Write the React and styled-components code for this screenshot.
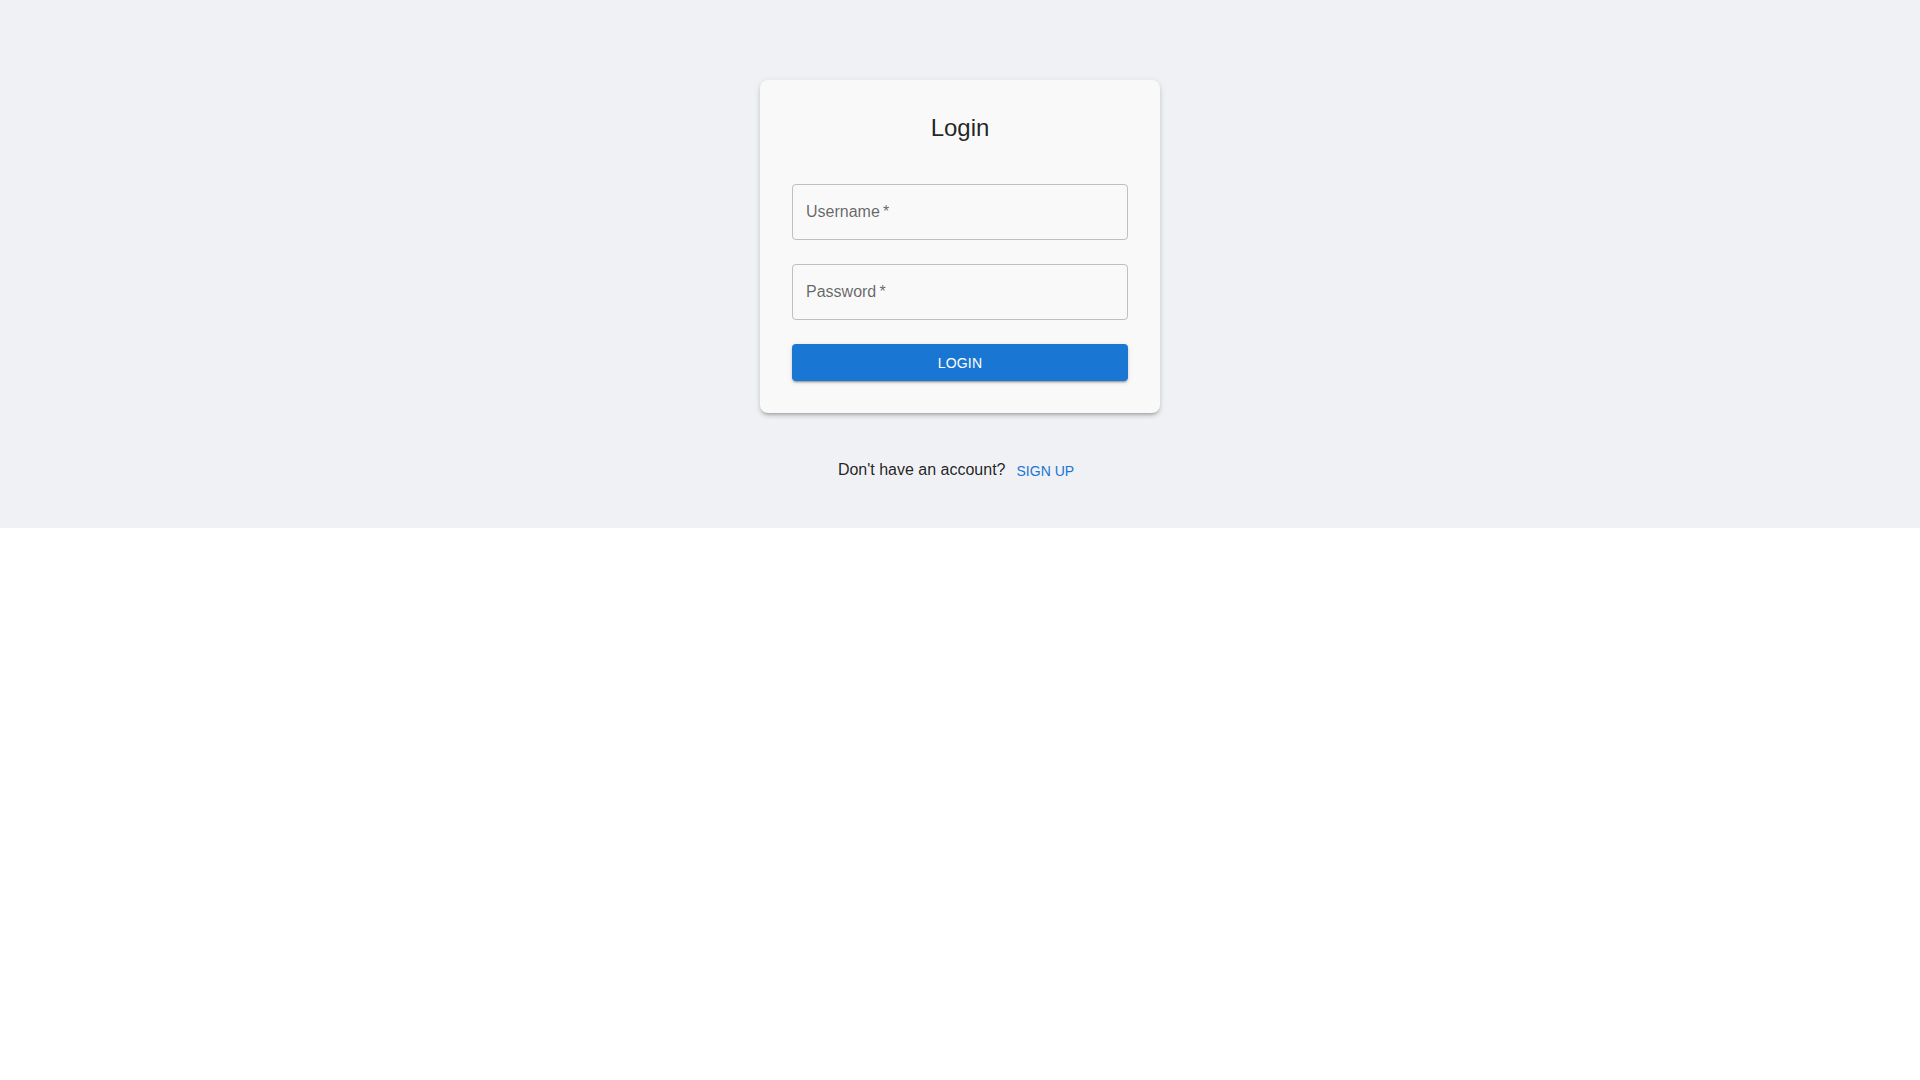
import React from "react"
import styled, { createGlobalStyle } from "styled-components"

export default function App() {
  return (
    <>
      <GlobalStyle />
      <Page>
        <Card>
          <Title>Login</Title>
          <Form onSubmit={(e) => e.preventDefault()}>
            <Field>
              <Input placeholder={"Username\u2009*"} />
            </Field>
            <Field>
              <Input type="password" placeholder={"Password\u2009*"} />
            </Field>
            <SubmitButton type="submit">Login</SubmitButton>
          </Form>
        </Card>
        <SignUpRow>
          <Prompt>Don't have an account?</Prompt>
          <TextButton type="button">Sign Up</TextButton>
        </SignUpRow>
      </Page>
    </>
  )
}

const GlobalStyle = createGlobalStyle`
  html, body {
    margin: 0;
    background: #ffffff;
    font-family: "Liberation Sans", Arial, sans-serif;
  }
  * {
    box-sizing: border-box;
  }
`

const Page = styled.div`
  background: #f0f1f5;
  padding: 80px 0 40px;
  display: flex;
  flex-direction: column;
  align-items: center;
`

const Card = styled.div`
  width: 400px;
  padding: 32px;
  background: #f9f9f9;
  border-radius: 8px;
  box-shadow: 0px 3px 3px -2px rgba(0, 0, 0, 0.2),
    0px 3px 4px 0px rgba(0, 0, 0, 0.14), 0px 1px 8px 0px rgba(0, 0, 0, 0.06);
`

const Title = styled.h1`
  margin: 0 0 24px;
  font-size: 24px;
  font-weight: 400;
  line-height: 32px;
  text-align: center;
  color: rgba(0, 0, 0, 0.87);
`

const Form = styled.form`
  display: flex;
  flex-direction: column;
`

const Field = styled.div`
  margin: 16px 0 8px;
`

const Input = styled.input`
  display: block;
  width: 100%;
  height: 56px;
  padding: 0 13px;
  border: 1px solid rgba(0, 0, 0, 0.23);
  border-radius: 4px;
  background: transparent;
  font-family: inherit;
  font-size: 16px;
  color: rgba(0, 0, 0, 0.87);
  outline: none;

  &::placeholder {
    color: rgba(0, 0, 0, 0.6);
  }
`

const SubmitButton = styled.button`
  margin-top: 16px;
  height: 37px;
  border: none;
  border-radius: 4px;
  background: #1976d2;
  color: #ffffff;
  font-family: inherit;
  font-size: 14px;
  text-transform: uppercase;
  letter-spacing: 0.2px;
  cursor: pointer;
  box-shadow: 0px 3px 1px -2px rgba(0, 0, 0, 0.2),
    0px 2px 2px 0px rgba(0, 0, 0, 0.14), 0px 1px 5px 0px rgba(0, 0, 0, 0.12);
`

const SignUpRow = styled.div`
  margin-top: 38px;
  height: 37px;
  display: flex;
  align-items: center;
`

const Prompt = styled.span`
  font-size: 16px;
  color: rgba(0, 0, 0, 0.87);
`

const TextButton = styled.button`
  margin-left: 3px;
  padding: 6px 8px;
  border: none;
  background: transparent;
  color: #1976d2;
  font-family: inherit;
  font-size: 14px;
  text-transform: uppercase;
  cursor: pointer;
  position: relative;
  top: 1px;
`
